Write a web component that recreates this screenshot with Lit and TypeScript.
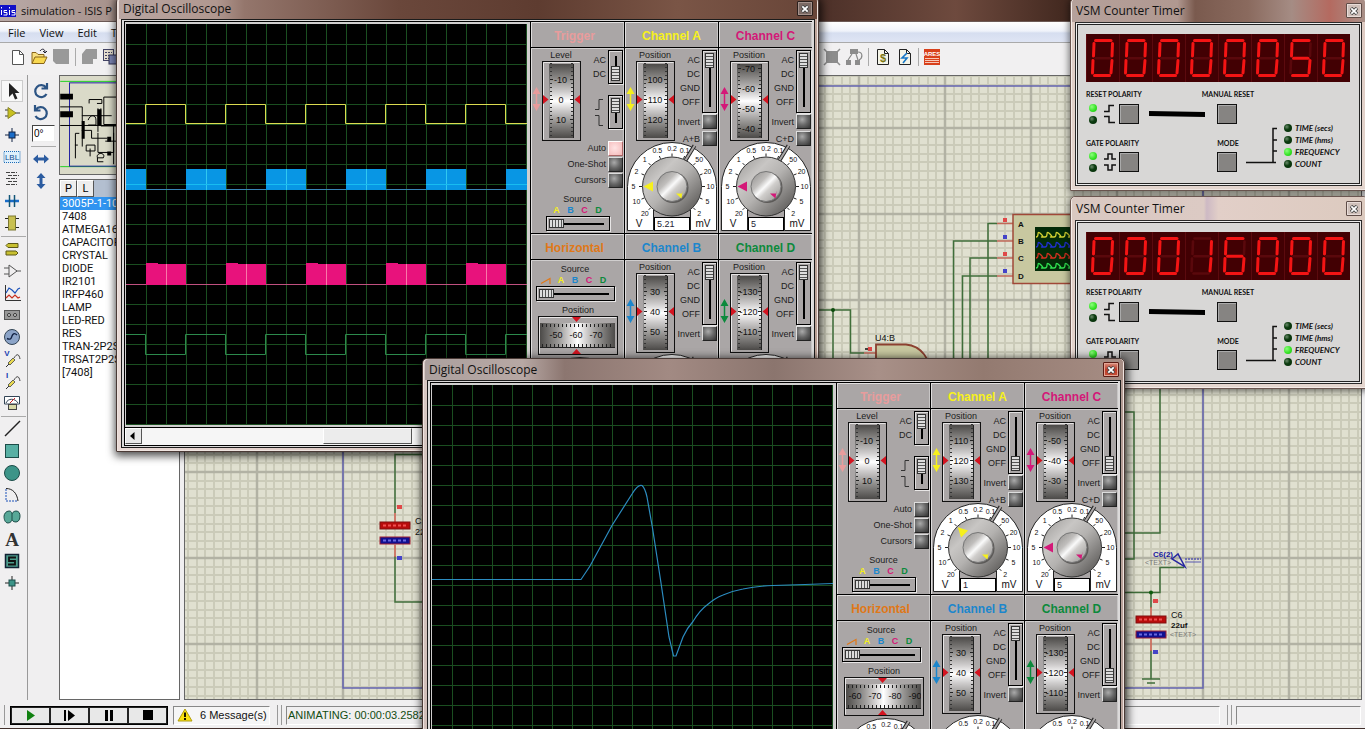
import { LitElement, html, svg, css } from "lit";
import { customElement, property } from "lit/decorators.js";
import { classMap } from "lit/directives/class-map.js";

const RED = "#d41420";
const COLORS = { A: "#f6f01c", B: "#1c86cc", C: "#d41878", D: "#0c8a3c" };

/* ---------- thumbwheel ---------- */
@customElement("thumb-wheel")
class ThumbWheel extends LitElement {
  @property({ attribute: false }) values: number[] = [];
  @property({ type: Number }) offset = 0;
  @property({ type: Boolean }) horizontal = false;

  static styles = css`
    :host { display: block; line-height: 0; }
    svg { display: block; }
    text { font: 9px "Liberation Sans", Arial, sans-serif; fill: #111; text-anchor: middle; }
  `;

  render() {
    return this.horizontal ? this.renderWide() : this.renderTall();
  }

  renderTall() {
    const ticks = Array.from({ length: 19 }, (_, i) => 2 + i * 4 + (this.offset ? 1 : 0));
    return html`<svg width="39" height="80" viewBox="0 0 39 80">
      <defs>
        <linearGradient id="g" x1="0" y1="0" x2="0" y2="1">
          <stop offset="0" stop-color="#4c4a48"/><stop offset=".2" stop-color="#8f8d8b"/>
          <stop offset=".38" stop-color="#cfcdcd"/><stop offset=".5" stop-color="#fff"/>
          <stop offset=".62" stop-color="#cfcdcd"/><stop offset=".8" stop-color="#8f8d8b"/>
          <stop offset="1" stop-color="#4c4a48"/>
        </linearGradient>
        <clipPath id="c"><rect x="7" y="3" width="25" height="74"/></clipPath>
      </defs>
      <rect x=".5" y=".5" width="38" height="79" fill="#aaa6a6" stroke="#111"/>
      <path d="M1.5 78.5V1.5H37.5" fill="none" stroke="#e8e6e6"/>
      <rect x="7" y="3" width="25" height="74" fill="url(#g)"/>
      <path d="M31.5 3V77" stroke="#222"/><path d="M7.5 3V77" stroke="#555" stroke-opacity=".5"/>
      ${ticks.map((y) => svg`<path d=${`M8 ${y + 0.5}h2M29 ${y + 0.5}h2`} stroke="#333"/>`)}
      <g clip-path="url(#c)">
        ${this.values.map((v, i) => {
          const y = 38.5 + (i - 1) * 20 + this.offset;
          return svg`<path d=${`M8 ${Math.floor(y) + 0.5}h3M28 ${Math.floor(y) + 0.5}h3`} stroke="#222"/>
            <text x=${v < 0 ? 18.5 : 19} y=${y + 3}>${v}</text>`;
        })}
      </g>
      <path d="M1 34v9l5.500 -4.500zM38 34v9l-5.500 -4.500z" fill=${RED}/>
    </svg>`;
  }

  renderWide() {
    const ticks = Array.from({ length: 18 }, (_, i) => 4 + i * 4);
    return html`<svg width="80" height="39" viewBox="0 0 80 39">
      <defs>
        <linearGradient id="g">
          <stop offset="0" stop-color="#4c4a48"/><stop offset=".25" stop-color="#9c9a98"/>
          <stop offset=".4" stop-color="#d8d6d6"/><stop offset=".5" stop-color="#fff"/>
          <stop offset=".6" stop-color="#d8d6d6"/><stop offset=".75" stop-color="#9c9a98"/>
          <stop offset="1" stop-color="#4c4a48"/>
        </linearGradient>
        <clipPath id="c"><rect x="2" y="7" width="75" height="25"/></clipPath>
      </defs>
      <rect x=".5" y=".5" width="79" height="38" fill="#aaa6a6" stroke="#111"/>
      <path d="M1.500 37.500V1.500H78.500" fill="none" stroke="#e8e6e6"/>
      <rect x="2" y="7" width="75" height="25" fill="url(#g)"/>
      <path d="M2 31.500H77" stroke="#222"/>
      ${ticks.map((x) => svg`<path d=${`M${x + 0.5} 8v3M${x + 0.5} 28v3`} stroke="#222"/>`)}
      <g clip-path="url(#c)">
        ${this.values.map((v, i) => svg`<text x=${18 + i * 20 + this.offset} y="22">${v}</text>`)}
      </g>
      <path d="M34 1h9l-4.500 5zM34 38h9l-4.500 -5z" fill=${RED}/>
    </svg>`;
  }
}

/* ---------- rotary knob ---------- */
@customElement("rotary-knob")
class RotaryKnob extends LitElement {
  @property() value = "";
  @property() color = "#fff";
  @property({ type: Number }) angle = -90;
  @property() unitLow = "V";
  @property() unitHigh = "mV";
  @property({ attribute: false }) scale = ["20", "10", "5", "2", "1", "0.5", "0.2", "0.1", "50", "20", "10", "5", "2"];

  static styles = css`
    :host { display: grid; width: 90px; height: 90px; }
    svg { grid-area: 1 / 1; display: block; }
    text { font: 7px "Liberation Sans", Arial, sans-serif; fill: #111; text-anchor: middle; }
    .unit { font-size: 10px; }
    input {
      grid-area: 1 / 1; align-self: end; margin: 0 0 1px 27px; width: 36px; height: 14px; box-sizing: border-box;
      border: 1px solid #000; background: #fff; padding: 0 2px; font: 9px "Liberation Sans", Arial, sans-serif; color: #223;
      border-radius: 0; outline: none;
    }
  `;

  render() {
    const pt = (deg: number, r: number) => {
      const a = (deg * Math.PI) / 180;
      return [45 + Math.sin(a) * r, 44.5 - Math.cos(a) * r];
    };
    return html`<svg width="90" height="90" viewBox="0 0 90 90">
        <defs>
          <linearGradient id="k" x1=".1" y1=".1" x2=".9" y2=".9">
            <stop offset="0" stop-color="#a8a6a4"/><stop offset=".25" stop-color="#c8c6c4"/>
            <stop offset=".5" stop-color="#b4b2b0"/><stop offset="1" stop-color="#5f5d5b"/>
          </linearGradient>
          <linearGradient id="s" x1=".1" y1=".1" x2=".9" y2=".9">
            <stop offset="0" stop-color="#9c9a98"/><stop offset=".3" stop-color="#c0bebc"/>
            <stop offset=".48" stop-color="#fafafa"/><stop offset=".62" stop-color="#d0cecc"/>
            <stop offset="1" stop-color="#a09e9c"/>
          </linearGradient>
        </defs>
        <path d="M.5 88.5V44.500A44.500 44 0 0 1 89.500 44.500V88.500H63.500V68H26.500V88.500Z" fill="#fff" stroke="#222"/>
        <path d="M67.500 3.500L57.500 20" stroke="#222" stroke-width="4"/><path d="M68 3L58 19" stroke="#aaa6a6" stroke-width="2"/>
        ${this.scale.map((t, i) => {
          const deg = -135 + i * 22.5;
          const [x1, y1] = pt(deg, 30);
          const [x2, y2] = pt(deg, 33);
          const [x, y] = pt(deg === 22.5 ? 19 : deg, 38.5);
          return svg`<path d=${`M${x1} ${y1}L${x2} ${y2}`} stroke="#222"/><text x=${x} y=${y + 2.5}>${t}</text>`;
        })}
        <circle cx="45" cy="44.500" r="29.500" fill="url(#k)" stroke="#333"/>
        <circle cx="46" cy="45.500" r="15.500" fill="#5c5a58"/>
        <circle cx="45" cy="44.500" r="15" fill="url(#s)" stroke="#777"/>
        <g transform=${`rotate(${this.angle + 90} 45 44.500)`}><path d="M16.500 44.500l9.500 -5v10z" fill=${this.color}/></g>
        <path d="M49 51.500h6.500v-3l-1 8z" fill=${this.color}/>
        <text class="unit" x="12" y="85">${this.unitLow}</text>
        <text class="unit" x="76" y="85">${this.unitHigh}</text>
      </svg>
      <input type="text" aria-label="Scale" .value=${this.value} />`;
  }
}

/* ---------- oscilloscope window ---------- */
interface Channel { wheel: number[]; offset?: number; coupling: number; value: string; angle?: number; }
interface ScopeModel {
  triggerDc: boolean; auto: boolean;
  a: Channel; b: Channel; c: Channel; d: Channel;
  horizontal: number[]; hOffset: number;
}

const scrollArrow = html`<svg width="5" height="8" viewBox="0 0 5 8"><path d="M4.500 0v8L0 4z" fill="#000"/></svg>`;
const closeIcon = html`<svg width="8" height="8" viewBox="0 0 8 8"><path d="M1 1l6 6M7 1l-6 6" stroke="#444" stroke-width="3.400"/><path d="M1.300 1.300l5.400 5.400M6.700 1.300l-5.400 5.400" stroke="#fff" stroke-width="1.800"/></svg>`;

@customElement("scope-window")
class ScopeWindow extends LitElement {
  @property({ attribute: false }) model!: ScopeModel;
  @property({ attribute: false }) trace: unknown = null;
  @property({ type: Boolean }) active = false;

  static styles = css`
    :host {
      display: block; font-family: "Liberation Sans", Arial, sans-serif; border: 1px solid #4a3a36; box-sizing: border-box;
      border-radius: 5px 5px 0 0; box-shadow: inset 0 0 0 1px #efe4e0, 1px 2px 8px 2px rgba(0, 0, 0, .7);
      background: linear-gradient(100deg, #ecdeda 0, #e2cfca 30%, #cdb6ac 75%, #b89d92 100%); padding: 0 3px 3px 4px;
    }
    :host([active]) { background: linear-gradient(100deg, #d8c8c4 0, #bca49c 30%, #a18880 75%, #bfa8a0 100%); }
    header { display: flex; justify-content: space-between; height: 21px; padding: 0 4px 0 4px; align-items: center;
      background: linear-gradient(90deg, #b9a6a2 0, #b0978f 14%, #94766c 18%, #6a473b 40%, #5e3c30 60%, #7a5546 80%, #684538 100%); margin: 0 -2px; border-radius: 4px 4px 0 0; }
    :host([active]) header { background: linear-gradient(90deg, #aca09e 0, #b7a8a4 14%, #8c7670 20%, #a28a83 35%, #8b756e 50%, #a89088 65%, #937a70 80%, #a68d84 100%); }
    h2 { margin: 0; font: 12px "Open Sans", "Noto Sans", sans-serif; line-height: 19px; color: #111; }
    .close { width: 16px; height: 15px; padding: 0; border: 1px solid #2b201d; border-radius: 1px; background: #7c6a64; display: grid; place-items: center; box-shadow: inset 0 0 0 1px #a4928c; }
    :host([active]) .close { background: linear-gradient(#d9907f, #bb3b28 50%, #c84e36); border-color: #5b1c14; box-shadow: inset 0 0 0 1px #e5a595; }
    .outer { border: 1px solid #1c1c1c; background: #dcdada; padding: 1px 2px; }
    .inner { border: 1px solid #000; display: flex; background: #d0cece; }
    .view { padding: 2px 3px 0 1px; }
    .screen { display: block; background: #000; }
    .scroll { border-top: 1px solid #000; margin: 2px -3px 0 -1px; height: 17px; display: flex; background: #f6f6f6; }
    .scroll button { width: 17px; height: 16px; padding: 0 2px 0 0; border: 1px solid; border-color: #fff #555 #555 #fff; background: #e8e8e8; display: grid; place-items: center; }
    .thumb { width: 89px; height: 16px; box-sizing: border-box; border: 1px solid; border-color: #fff #555 #555 #fff; background: #ececec; margin-left: 181px; }
    .panel { display: grid; grid-template-columns: repeat(3, 94px); background: #aaa6a6; }
    section { border-left: 1px solid #000; border-bottom: 1px solid #000; box-shadow: inset 1px 0 #e0dede, inset -1px 0 #c8c6c6; }
    section.last { border-bottom: 0; }
    h3 { margin: 0; height: 25px; border-bottom: 1px solid #000; font-size: 12px; line-height: 28px; text-align: center; font-weight: bold; box-shadow: inset 1px 1px #e0dede, 0 1px #d0cece; }
    h3.ct, h3.ch { padding-right: 6px; }
    .body { height: 185px; font-size: 9px; color: #1c1c1c; }
    .ca { color: #f6f01c; } .cb { color: #1c86cc; } .cc { color: #d41878; } .cd { color: #0c8a3c; }
    .ct { color: #e89c9c; } .ch { color: #e07818; }
    .top { height: 94px; display: flex; }
    .pos { display: grid; grid-template: 13px 80px / 11px 39px; width: 50px; }
    .pos span { grid-column: 1 / 3; padding-left: 10px; text-align: center; line-height: 15px; }
    .pos svg { margin-top: 26px; }
    .side { flex: 1; display: grid; grid-template-columns: 1fr 15px; column-gap: 2px; row-gap: 1px; padding: 2px 1px 0 0; align-content: start; margin-left: -1px; }
    .labels { text-align: right; line-height: 14px; padding-top: 3px; }
    .side label { text-align: right; line-height: 16px; }
    .side.trig { margin-left: 0; }
    .edge { display: grid; justify-items: end; align-content: start; gap: 5px; padding: 4px 3px 0 0; }
    .gap { height: 9px; grid-column: 1 / 3; }
    input { margin: 0; appearance: none; -webkit-appearance: none; box-sizing: border-box; border-radius: 0; }
    input[type="checkbox"] { width: 15px; height: 15px; border: 1px solid #222; border-color: #ddd #222 #222 #ddd; background: radial-gradient(circle at 40% 35%, #aaa 0, #666 50%, #333 100%); }
    input[type="checkbox"]:checked { background: radial-gradient(circle at 45% 45%, #ffe4e4 0, #f4b8b8 100%); border-color: #fff #a66 #a66 #fff; }
    input[type="range"] { border: 1px solid #000; box-shadow: 1px 1px #e8e6e6, inset 1px 1px #e0dede; padding: 2px; }
    .vert { writing-mode: vertical-lr; width: 15px; height: 63px; background: linear-gradient(#000, #000) center / 2px calc(100% - 10px) no-repeat #aaa6a6; }
    .vert.short { height: 34px; }
    .horz { width: 64px; height: 15px; background: linear-gradient(#000, #000) center / calc(100% - 10px) 2px no-repeat #aaa6a6; display: block; }
    .horz.long { width: 79px; }
    input::-webkit-slider-thumb { -webkit-appearance: none; border: 1px solid #333; box-sizing: border-box; }
    .vert::-webkit-slider-thumb { width: 9px; height: 15px; background: repeating-linear-gradient(#ddd 0 2px, #555 2px 3px); }
    .horz::-webkit-slider-thumb { width: 15px; height: 9px; background: repeating-linear-gradient(90deg, #ddd 0 2px, #555 2px 3px); }
    rotary-knob { margin-left: 2px; }
    .modes { display: grid; grid-template-columns: 1fr 15px; gap: 1px 2px; padding-right: 1px; text-align: right; line-height: 15px; margin-top: -1px; }
    .source { display: grid; justify-items: center; margin-top: 6px; line-height: 11px; }
    .source.h { margin-top: 0; padding: 4px 5px 0 0; }
    .letters { display: flex; font-weight: bold; font-size: 9px; line-height: 11px; align-items: center; }
    .letters b { width: 14px; text-align: center; }
    .hpos { display: grid; justify-items: center; padding: 3px 4px 0 0; line-height: 12px; }
    .hpos rotary-knob { margin: 2px 0 0 4px; }
  `;

  renderArrow(color: string) {
    return html`<svg width="11" height="24" viewBox="0 0 11 24"><path d="M5.500 4V20" stroke=${color} stroke-width="1.500"/><path d="M5.500 0L9.500 7h-8zM5.500 24L9.500 17h-8z" fill=${color}/></svg>`;
  }

  renderChannel(name: "A" | "B" | "C" | "D", ch: Channel, sum: string, last = false) {
    const color = COLORS[name];
    return html`<section class=${classMap({ last })}>
      <h3 class=${"c" + name.toLowerCase()}>Channel ${name}</h3>
      <div class="body">
        <div class="top">
          <div class="pos"><span>Position</span>${this.renderArrow(color)}
            <thumb-wheel .values=${ch.wheel} .offset=${ch.offset ?? 0}></thumb-wheel></div>
          <div class="side">
            <div class="labels">AC<br />DC<br />GND<br />OFF</div>
            <input class="vert" type="range" min="0" max="3" .value=${String(ch.coupling)} aria-label=${`Channel ${name} coupling`} />
            <label for=${"inv" + name}>Invert</label><input id=${"inv" + name} type="checkbox" />
            ${sum ? html`<label for=${"sum" + name}>${sum}</label><input id=${"sum" + name} type="checkbox" />` : null}
          </div>
        </div>
        <rotary-knob .value=${ch.value} .color=${color} .angle=${ch.angle ?? -90}></rotary-knob>
      </div>
    </section>`;
  }

  render() {
    const m = this.model;
    const lines = Array.from({ length: 20 }, (_, i) => (i + 1) * 20 + 0.5);
    return html`
      <header><h2>Digital Oscilloscope</h2><button class="close" aria-label="Close">${closeIcon}</button></header>
      <div class="outer"><div class="inner">
        <div class="view">
          <svg class="screen" width="401" height="401" viewBox="0 0 401 401">
            ${lines.map((p) => svg`<path d=${`M${p} 0V401M0 ${p}H401`} stroke="#1a4e20"/>`)}
            ${this.trace}
          </svg>
          <div class="scroll"><button aria-label="Scroll left">${scrollArrow}</button><div class="thumb"></div></div>
        </div>
        <div class="panel">
          <section>
            <h3 class="ct">Trigger</h3>
            <div class="body">
              <div class="top">
                <div class="pos"><span>Level</span>${this.renderArrow("#e89c9c")}
                  <thumb-wheel .values=${[-10, 0, 10]}></thumb-wheel></div>
                <div class="side trig">
                  <div class="labels">AC<br />DC</div>
                  <input class="vert short" type="range" min="0" max="1" .value=${m.triggerDc ? "1" : "0"} aria-label="Trigger coupling" />
                  <div class="gap"></div>
                  <div class="edge">
                    <svg width="8" height="11" viewBox="0 0 8 11"><path d="M0 10.500h4V.5h4" fill="none" stroke="#333"/></svg>
                    <svg width="8" height="11" viewBox="0 0 8 11"><path d="M0 .5h4v10h4" fill="none" stroke="#333"/></svg>
                  </div>
                  <input class="vert short" type="range" min="0" max="1" value="0" aria-label="Trigger edge" />
                </div>
              </div>
              <div class="modes">
                <label for="auto">Auto</label><input id="auto" type="checkbox" .checked=${m.auto} />
                <label for="one">One-Shot</label><input id="one" type="checkbox" />
                <label for="cur">Cursors</label><input id="cur" type="checkbox" />
              </div>
              <div class="source">
                <label for="tsrc">Source</label>
                <div class="letters"><b class="ca">A</b><b class="cb">B</b><b class="cc">C</b><b class="cd">D</b></div>
                <input id="tsrc" class="horz" type="range" min="0" max="3" value="0" />
              </div>
            </div>
          </section>
          ${this.renderChannel("A", m.a, "A+B")}
          ${this.renderChannel("C", m.c, "C+D")}
          <section class="last">
            <h3 class="ch">Horizontal</h3>
            <div class="body">
              <div class="source h">
                <label for="hsrc">Source</label>
                <div class="letters"><svg width="14" height="8" viewBox="0 0 14 8"><path d="M1 6.500L10 1.500V7" fill="none" stroke="#e07818" stroke-width="1.200"/></svg><b class="ca">A</b><b class="cb">B</b><b class="cc">C</b><b class="cd">D</b></div>
                <input id="hsrc" class="horz long" type="range" min="0" max="4" value="0" />
              </div>
              <div class="hpos"><span>Position</span>
                <thumb-wheel horizontal .values=${m.horizontal} .offset=${m.hOffset}></thumb-wheel>
                <rotary-knob value="50" color="#e07818" unitLow="ms" unitHigh="µs" .scale=${["200", "50", "20", "5", "1", "0.5", "0.2", "0.1", "50", "20", "5", "2", "0.5"]}></rotary-knob>
              </div>
            </div>
          </section>
          ${this.renderChannel("B", m.b, "", true)}
          ${this.renderChannel("D", m.d, "", true)}
        </div>
      </div></div>`;
  }
}

/* ---------- counter timer window ---------- */
const SEGMENTS: Record<string, string> = { "0": "abcdef", "1": "bc", "5": "afgcd", "6": "afgedc" };
const SEG_PATHS: Record<string, string> = {
  a: "M9.500 6.500H25", b: "M26.500 9.500L26 22", c: "M26 26.500L25 39", d: "M8.500 41.500H23.500",
  e: "M7 26.500L6.500 39", f: "M8 9.500L7.500 22", g: "M9.500 24.200H24",
};

@customElement("counter-window")
class CounterWindow extends LitElement {
  @property() digits = "";
  @property({ type: Boolean }) dark = false;

  static styles = css`
    :host {
      display: block; box-sizing: border-box; border: 1px solid #6b5650; border-radius: 5px 5px 0 0; padding: 0 5px 4px 4px;
      background: linear-gradient(#ddc9c1, #e4d6cf); box-shadow: inset 0 0 0 1px #f4ebe7, 0 1px 7px 1px rgba(0, 0, 0, .55);
    }
    header { display: flex; justify-content: space-between; align-items: center; height: 23px; padding-left: 4px; margin: 0 -3px; padding-right: 3px;
      background: linear-gradient(90deg, #d9c8c1 0, #dccac4 45%, #cdb9c4 46%, #e2cfc8 50%, #dccabf 100%); border-radius: 4px 4px 0 0; }
    :host([dark]) header { background: linear-gradient(90deg, #b5a19b 0, #b09890 36%, #7a5a4e 42%, #8a6a5e 60%, #a58c84 75%, #b46a60 88%, #a89088 100%); }
    h2 { margin: 0; font: 12px "Open Sans", "Noto Sans", sans-serif; line-height: 22px; color: #111; }
    .close { width: 16px; height: 15px; padding: 0; border: 1px solid #5f4d48; background: #cfc0ba; display: grid; place-items: center; border-radius: 1px; box-shadow: inset 0 0 0 1px #e8dcd8; }
    .outer { border: 1px solid #2a2a2a; background: #eee; padding: 1px; }
    .inner { border: 1px solid #222; background: #d8d7d6; height: 160px; box-sizing: border-box; padding: 9px 0 0 8px; font: bold 8px Lato, "Open Sans", sans-serif; color: #111; }
    .display { display: block; }
    .controls { display: grid; grid-template-columns: 17px 16px 30px 74px 54px 1fr; grid-template-rows: 21px 22px 26px 22px; align-items: center; }
    .cap { grid-column: 1 / 5; line-height: 12px; padding-top: 3px; font-size: 7px; white-space: nowrap; }
    .cap.mid { grid-column: 5; margin-left: -22px; width: 54px; text-align: center; }
    .cap.low { padding-top: 10px; }
    .leds { grid-column: 1; display: grid; gap: 4px; padding-left: 3px; }
    .led { width: 8px; height: 8px; border-radius: 50%; background: radial-gradient(circle at 35% 35%, #6a8a6a 0, #0c3c10 40%, #062a08 100%); }
    .led.on { background: radial-gradient(circle at 35% 35%, #8cff7c 0, #30e020 60%, #28b81c 100%); }
    .key { width: 20px; height: 20px; padding: 0; border: 1px solid #111; background: #868482; box-shadow: inset 1px 1px #aaa; }
    .bar { width: 56px; height: 6px; }
    .k2 { grid-column: 5; margin-left: -6px; }
    .out { grid-column: 6; grid-row: 3 / 5; align-self: end; display: flex; align-items: center; margin: 0 0 3px -31px; height: 48px; }
    ul { list-style: none; margin: 0 0 0 6px; padding: 0; display: grid; }
    li { display: flex; align-items: center; gap: 3px; height: 12px; font-style: italic; white-space: nowrap; }
  `;

  renderRow(high: string, low: string, label: string, bar: boolean) {
    return html`
      <div class="leds"><i class="led on"></i><i class="led"></i></div>
      <svg width="14" height="20" viewBox="0 0 14 20"><path d=${high + low} fill="none" stroke="#111" stroke-width="1.500"/></svg>
      <button class="key" aria-label=${label}></button>
      ${bar ? html`<svg class="bar" viewBox="0 0 56 6"><path d="M0 0L56 1V6L0 5z" fill="#000"/></svg>` : html`<span></span>`}`;
  }

  render() {
    return html`
      <header><h2>VSM Counter Timer</h2><button class="close" aria-label="Close">${closeIcon}</button></header>
      <div class="outer"><div class="inner">
        <svg class="display" width="264" height="48" viewBox="0 0 264 48" role="img" aria-label=${this.digits}>
          <rect width="264" height="48" fill="#420003"/>
          ${[...this.digits].map((d, i) => svg`<g transform=${`translate(${i * 33} 0)`}>
            <path d="M.5 0V48" stroke="#5c0a0e"/>
            ${Object.entries(SEG_PATHS).map(([k, p]) => {
              const on = SEGMENTS[d].includes(k);
              return svg`<path d=${p} stroke=${on ? "#f41414" : "#5a080c"} stroke-width=${on ? 3 : 2.6} stroke-linecap="round"/>`;
            })}</g>`)}
        </svg>
        <div class="controls">
          <span class="cap">RESET POLARITY</span><span class="cap mid">MANUAL RESET</span>
          ${this.renderRow("M1 7.500h5v-6h5", "M1 12.500h5v6h6", "Reset polarity", true)}
          <button class="key k2" aria-label="Manual reset"></button>
          <span class="cap low">GATE POLARITY</span><span class="cap mid low">MODE</span>
          ${this.renderRow("M1 7h4v-5h4v5h4", "M1 13h4v5h4v-5h4", "Gate polarity", false)}
          <button class="key k2" aria-label="Mode"></button>
          <div class="out">
            <svg width="32" height="48" viewBox="0 0 32 48"><path d="M0 40.500H30M27 40V6.500h4M27 18h4M27 29h4" fill="none" stroke="#111" stroke-width="1.500"/></svg>
            <ul>
              <li><i class="led"></i>TIME (secs)</li><li><i class="led"></i>TIME (hms)</li>
              <li><i class="led on"></i>FREQUENCY</li><li><i class="led"></i>COUNT</li>
            </ul>
          </div>
        </div>
      </div></div>`;
  }
}

/* ---------- traces ---------- */
const square = (y0: number, y1: number) => {
  let d = `M0 ${y0}`;
  let up = false;
  for (let x = 20; x < 400; x += 40) {
    up = !up;
    d += `H${x - 0.5}V${up ? y1 : y0}`;
  }
  return d + "H401";
};
const xs = (start: number) => [0, 1, 2, 3, 4].map((i) => start + i * 80);
const tracePwm = svg`
  <path d=${square(99.5, 80.5)} fill="none" stroke="#dcdc50"/>
  <path d="M0 165.500H401" stroke="#3a86b8"/>
  <rect x="0" y="145" width="20" height="21" fill="#0896e4"/>
  ${xs(60).map((x) => svg`<rect x=${x} y="145" width=${Math.min(40, 401 - x)} height="21" fill="#0896e4"/><path d=${`M${x + 20.5} 145v21`} stroke="#30c8f0"/><path d=${`M${x} 160.500h40`} stroke="#18bcf0"/>`)}
  <rect x="380" y="145" width="21" height="21" fill="#0896e4"/><path d="M0 160.500h20M380 160.500h21" stroke="#18bcf0"/>
  <path d="M0 260.500H401" fill="none" stroke="#c05080"/>
  ${xs(20).map((x) => svg`<path d=${`M${x} 239h12v1h28v21h-40z`} fill="#e8127c"/><path d=${`M${x + 20.5} 240v21`} stroke="#f878a8"/>`)}
  <path d=${square(310.5, 330.5)} fill="none" stroke="#2c8a4c"/>`;
const tracePulse = svg`<path d="M0 194.500H149L158 181L180 140.500L200 109Q206 99 210 100.500Q213 103 215 112L220.500 143L229 198L237 252L241.500 271H244L251 252Q255 243 261 236.500Q268 225 275 220Q283 213 291 210Q300 206 311 204Q325 201 341 200.500L373 199.500L401 198.500" fill="none" stroke="#2c8cc0" stroke-width="1.200"/>`;

const scopeOne: ScopeModel = {
  triggerDc: true, auto: true,
  a: { wheel: [100, 110, 120], coupling: 0, value: "5.21" },
  b: { wheel: [30, 40, 50], coupling: 0, value: "5" },
  c: { wheel: [-70, -60, -50, -40], offset: -11, coupling: 0, value: "5" },
  d: { wheel: [-130, -120, -110], coupling: 0, value: "5" },
  horizontal: [-50, -60, -70], hOffset: 0,
};
const scopeTwo: ScopeModel = {
  triggerDc: false, auto: false,
  a: { wheel: [110, 120, 130], coupling: 3, value: "1", angle: 45 },
  b: { wheel: [30, 40, 50], coupling: 0, value: "5" },
  c: { wheel: [-50, -40, -30], coupling: 3, value: "5" },
  d: { wheel: [-130, -120, -110], coupling: 3, value: "5" },
  horizontal: [-60, -70, -80, -90], hOffset: -7,
};
scopeTwo.a.angle = -45;

/* ---------- tool icons (22 x 22 box) ---------- */
const ico = (body: unknown) => html`<svg width="22" height="22" viewBox="0 0 22 22">${body}</svg>`;
const OLIVE = "#c8c020";
const modeGroups: [string, unknown][][] = [
  [
    ["Selection", ico(svg`<path d="M8 3v14l3.500-3.500 2.500 6 2.500-1-2.500-5.500h4.500z" fill="#222"/>`)],
    ["Component", ico(svg`<path d="M4 8h3M4 14h3M14 11h5" stroke="#333"/><path d="M7 5.500v11l8-5.500z" fill=${OLIVE} stroke="#8a8628"/>`)],
    ["Junction", ico(svg`<path d="M11 4v14M4 11h14" stroke="#124"/><rect x="8" y="8" width="6" height="6" fill="#1a6cc8" stroke="#124"/>`)],
    ["Label", ico(svg`<rect x="3" y="5.500" width="16" height="11" fill="#dff0fc" stroke="#1a6cb8" stroke-dasharray="1 1"/><text class="lbl" x="11" y="14">LBL</text>`)],
    ["Script", ico(svg`<path d="M5 4.500h11M7 7.500h11M5 10.500h11M7 13.500h9M5 16.500h11" stroke="#444" stroke-dasharray="4 1"/>`)],
    ["Bus", ico(svg`<path d="M4 11h14" stroke="#1a6cc8" stroke-width="2.500"/><path d="M8.500 5v12M13.500 5v12" stroke="#157" stroke-width="1.500"/>`)],
    ["Subcircuit", ico(svg`<path d="M4 6.500h3M4 15.500h3M15 6.500h3M15 15.500h3" stroke="#222"/><rect x="7.500" y="4" width="7" height="14" fill="#c8c050" stroke="#7c7830"/>`)],
  ],
  [
    ["Terminal", ico(svg`<path d="M7 5.500h10v4H7l-2-2zM5 13h10l2 2-2 2H5z" fill="#c8c030" stroke="#5c5818"/>`)],
    ["Pin", ico(svg`<path d="M8 5v12l8-6zM3 8h5M3 14h5M15 11h5" fill="none" stroke="#555"/>`)],
    ["Graph", ico(svg`<path d="M4.500 3v15.500H20" fill="none" stroke="#333"/><path d="M5 11l3-5 3 2 3 3 3-4 2-1" fill="none" stroke="#1a50b8" stroke-width="1.200"/><path d="M5 16l3-3 3 3 3-3 3 3 2-1" fill="none" stroke="#c83020" stroke-width="1.200"/>`)],
    ["Tape", ico(svg`<rect x="3.500" y="6.500" width="15" height="9" fill="#999" stroke="#555"/><circle cx="8" cy="11" r="1.500" fill="#ddd" stroke="#333"/><circle cx="14" cy="11" r="1.500" fill="#ddd" stroke="#333"/>`)],
    ["Generator", ico(svg`<circle cx="11" cy="11" r="7.500" fill="#8ca4c8" stroke="#345"/><path d="M6 12.500c4 2 4.500-1 5-2.500s2-4 5-1" fill="none" stroke="#124" stroke-width="1.400"/>`)],
    ["Voltage probe", ico(svg`<text class="tip" x="6" y="8">V</text><path d="M5 19l3-3" stroke="#333"/><path d="M7 15l5-5 2 2-5 5z" fill="#e8d850" stroke="#665"/><path d="M13 10c3-5 5-4 6 1" fill="none" stroke="#444"/>`)],
    ["Current probe", ico(svg`<text class="tip" x="6" y="8">I</text><path d="M5 19l3-3" stroke="#333"/><path d="M7 15l5-5 2 2-5 5z" fill="#e8d850" stroke="#665"/><path d="M13 10c3-5 5-4 6 1" fill="none" stroke="#444"/>`)],
    ["Instrument", ico(svg`<path d="M3.500 12V4.500h15V12z" fill="#fff" stroke="#345"/><path d="M5 11c2-5 9-5 12 0" fill="none" stroke="#345"/><path d="M9 11l5-5" stroke="#c22"/><rect x="7.500" y="12.500" width="8" height="5" fill="#d8d8a8" stroke="#444"/>`)],
  ],
  [
    ["Line", ico(svg`<path d="M4 18L19 3" stroke="#222" stroke-width="1.500"/>`)],
    ["Box", ico(svg`<rect x="4.500" y="4.500" width="13" height="13" fill="#58b0a4" stroke="#1c4c48"/>`)],
    ["Circle", ico(svg`<circle cx="11" cy="11" r="7.500" fill="#3c9488" stroke="#1c4c48"/>`)],
    ["Arc", ico(svg`<path d="M5 5v12h12" fill="none" stroke="#1a50b8" stroke-dasharray="2 1"/><path d="M5 4.500c7 0 11 5 12 12.500" fill="none" stroke="#222"/>`)],
    ["Path", ico(svg`<path d="M8 5c3 0 3 3 3 3s1-3 4-3 4 2.500 4 5-1 6-4 6-4-2-4-2-1 3-4 3-4-4-4-6.500S5 5 8 5z" fill="#58a898" stroke="#1c4c48"/><path d="M11 8v6" stroke="#1c4c48"/>`)],
    ["Text", ico(svg`<text class="bigA" x="11" y="18">A</text>`)],
    ["Symbol", ico(svg`<rect x="4.500" y="4.500" width="13" height="13" fill="#4c9c8c" stroke="#123" stroke-width="1.500"/><path d="M15 7.500H8v3.500h6v3.500H7" fill="none" stroke="#111" stroke-width="1.800"/>`)],
    ["Marker", ico(svg`<path d="M11 4v14M4 11h14" stroke="#222"/><rect x="8" y="8" width="6" height="6" fill="#3c9488" stroke="#1c4c48"/>`)],
  ],
];
const rotate = (d: string, label: string): [string, unknown] => [label, ico(svg`<path d=${d} fill="none" stroke="#2c5484" stroke-width="2.200"/>`)];
const dotted = svg`<path d="M6.500 3.500h7l4 4v11h-11z" fill="#f4f4e8" stroke="#222"/><path d="M13.500 3.500v4h4" fill="none" stroke="#222"/>`;

@customElement("app-root")
class AppRoot extends LitElement {
  static styles = css`
    :host { display: block; position: relative; height: 100vh; overflow: hidden; background: #f0eff0; font-family: "Liberation Sans", Arial, sans-serif; color: #111; }
    .shell { display: flex; flex-direction: column; height: 100%; border-bottom: 1px solid #42302c; box-sizing: border-box; }
    .title { height: 22px; display: flex; align-items: center; gap: 5px; font: 11px "Open Sans", "Noto Sans", sans-serif;
      background: linear-gradient(90deg, #b8a9a6 0, #a8938d 8%, #6a4a40 15%, #4c3028 60%, #6e4a3e 70%, #432920 78%, #5a3a30 100%); border-bottom: 1px solid #6c5a56; box-sizing: border-box; }
    .menu { height: 21px; display: flex; align-items: center; padding-left: 8px; gap: 14px; font: 11px "Open Sans", "Noto Sans", sans-serif; background: linear-gradient(#fff 0, #f0f3fa 45%, #d6def0 55%, #dfe5f4 100%); border-bottom: 1px solid #aaa; box-sizing: border-box; }
    .menu a { color: #111; text-decoration: none; white-space: nowrap; }
    .tools { height: 32px; display: flex; align-items: center; background: #f1f0f1; box-sizing: border-box; padding: 0 0 4px 6px; }
    .tools button, .modes button { width: 22px; height: 22px; padding: 0; border: 0; background: none; display: block; }
    .tools .left { display: flex; align-items: center; flex: 0 0 815px; }
    .sep { width: 6px; height: 18px; background: linear-gradient(#aaa, #aaa) center / 1px 100% no-repeat; }
    .main { flex: 1; display: flex; min-height: 0; padding-right: 3px; }
    .modes { width: 28px; box-sizing: border-box; border-right: 1px solid #999; padding: 5px 0 0 1px; }
    .modes .pressed { outline: 1px solid #ccc; outline-offset: -1px; background: #f8f8f8; }
    .rot { width: 31px; display: flex; flex-direction: column; align-items: center; padding-top: 5px; box-sizing: border-box; }
    .rot button { width: 22px; height: 22px; padding: 0; border: 0; background: none; display: block; margin-right: 6px; }
    .rot input { width: 23px; height: 17px; box-sizing: border-box; border: 1px solid #444; border-color: #444 #eee #eee #444; background: #fff; font-size: 10px; padding: 0 1px; margin: 1px 0 2px; border-radius: 0; }
    .hr { height: 4px; width: 25px; background: linear-gradient(#aaa, #aaa) center / 100% 1px no-repeat; }
    .side { width: 121px; display: flex; flex-direction: column; }
    .preview { border: 1px solid #666; background: #dadac8; height: 100px; box-sizing: border-box; overflow: hidden; display: block; }
    .parts { margin-top: 4px; border: 1px solid #666; background: #fff; flex: 1; min-height: 0; font: 11px Roboto, "Liberation Sans", sans-serif; }
    .bar { height: 17px; background: #b3bfd0; display: flex; }
    .bar button { width: 17px; padding: 0; border: 1px solid; border-color: #fff #555 #555 #fff; background: #ededed; font: 11px Roboto, "Liberation Sans", sans-serif; }
    ul { margin: 0; padding: 0; list-style: none; }
    li { height: 13px; line-height: 13px; padding-left: 2px; }
    li.sel { background: #3094f0; color: #fff; }
    .sheet { flex: 1; margin-left: 4px; border: 1px solid #666; background: #e0e0d0; min-width: 0; }
    .sheet svg { display: block; width: 100%; height: 100%; }
    .status { height: 28px; display: flex; align-items: center; font-size: 11px; box-sizing: border-box; padding: 2px 4px 0; }
    .play { display: flex; border: 1px solid #000; margin-left: 5px; }
    .play button { width: 39px; height: 17px; padding: 0; border: 1px solid; border-color: #fff #444 #444 #fff; background: #e8e8e8; display: grid; place-items: center; outline: 1px solid #222; outline-offset: -1px; }
    .field { height: 19px; box-sizing: border-box; border: 1px solid; border-color: #888 #fff #fff #888; display: flex; align-items: center; white-space: nowrap; overflow: hidden; }
    .msg { width: 97px; margin-left: 5px; padding-left: 3px; gap: 7px; background: #f6f6f6; }
    .anim { flex: 1; color: #124c12; padding-left: 1px; }
    .grip { width: 5px; height: 20px; border: solid #999; border-width: 0 1px; margin: 0 4px 0 7px; box-sizing: border-box; }
    .grip.one { width: 1px; border-width: 0 0 0 1px; margin: 0; }
    .last { width: 125px; }
    .win { position: absolute; }
    .w1 { left: 116px; top: -3px; width: 703px; }
    .w2 { left: 422px; top: 358px; width: 703px; }
    .c1 { left: 1070px; top: -2px; width: 298px; }
    .c2 { left: 1070px; top: 196px; width: 298px; }
    text { font-family: "Liberation Sans", Arial, sans-serif; }
    .t { font-size: 9px; fill: #111; } .s { font-size: 8px; fill: #111; font-weight: bold; } .g { font-size: 7px; fill: #777; } .n { font-size: 8px; fill: #1818a0; font-weight: bold; }
    .lbl { font-size: 8px; fill: #124c90; text-anchor: middle; }
    .tip { font-size: 8px; fill: #1a40b0; text-anchor: middle; font-weight: bold; }
    .bigA { font: bold 19px "Liberation Serif", serif; fill: #333; text-anchor: middle; }
    .ares { font: bold 6px "Liberation Sans", sans-serif; fill: #fff; text-anchor: middle; }
    .dol { font: bold 11px "Liberation Sans", sans-serif; fill: #7a7410; text-anchor: middle; }
  `;

  renderSheet() {
    const minor = [9, 17, 26, 34, 43, 52, 60, 69, 77].map((p) => `M${p} 0V86M0 ${p}H86`).join("");
    const cap = (x: number, y: number) => svg`
      <path d=${`M${x} ${y - 12}v12M${x} ${y + 20}v12`} stroke="#d06050" stroke-width="1.500"/>
      <rect x=${x - 15} y=${y - 3} width="30" height="7" fill="#b80c0c" stroke="#801010"/><path d=${`M${x - 12} ${y + 0.5}h24`} stroke="#f05050" stroke-width="2" stroke-dasharray="3 2"/>
      <rect x=${x - 15} y=${y + 12} width="30" height="7" fill="#101090" stroke="#a02030"/><path d=${`M${x - 12} ${y + 15.5}h24`} stroke="#6868e0" stroke-width="2" stroke-dasharray="3 2"/>
      <rect x=${x + 2} y=${y - 20} width="5" height="4" fill="#e04848"/><rect x=${x + 2} y=${y + 31} width="5" height="4" fill="#4444c8"/>`;
    const waves: [number, string][] = [[235, "#d0d030"], [245, "#2030d0"], [256, "#d03020"], [266, "#30e050"]];
    return html`<svg><defs>
        <pattern id="grid" x="0" y="0" width="86" height="86" patternUnits="userSpaceOnUse" patternTransform="translate(-1 42)">
          <path d=${minor} stroke="#cbcbb9" stroke-width="2"/><path d="M0 0V86M0 0H86M86 0V86M0 86H86" stroke="#b2b2a4" stroke-width="2.500"/>
        </pattern></defs>
      <g transform="translate(-185 -76)">
        <rect x="0" y="0" width="3000" height="2000" fill="url(#grid)"/>
        <path d="M343 86H1203V688H343Z" fill="none" stroke="#6464b0" stroke-width="1.500"/>
        <g fill="none" stroke="#3f6e3a" stroke-width="1.500">
          <path d="M440 454.500H395V513M395 556V602H440"/>
          <path d="M800 310H850.500V353H864M833 310V400"/>
          <path d="M997 223.500H988V400M997 241H953.500V400M997 258H970V400M997 276H962.500V400"/>
          <path d="M1160 380V533H1100M1100 412H1134V559H1100M1100 592.500H1160V567.500H1184M1151 592V608M1151 650V679M1142 679H1160M1147 683H1155"/>
        </g>
        <circle cx="833" cy="310" r="2" fill="#0c4c0c"/><circle cx="1151" cy="592.500" r="2" fill="#0c5c0c"/>
        <path d="M997 223.500H1013M997 241H1013M997 258H1013M997 276H1013M864 353H876" stroke="#c06858" stroke-width="1.500"/>
        <rect x="1013" y="214.500" width="80" height="69" fill="#c8c8a0" stroke="#a04838" stroke-width="1.500"/>
        <rect x="1035" y="227" width="50" height="44" fill="#042c08"/>
        ${waves.map(([y, c]) => svg`<path d=${`M1036 ${y + 2}` + "q2 0 2-3t3 0 1 3 3 0".repeat(7)} fill="none" stroke=${c} stroke-width="1.300"/>`)}
        <rect x="1003" y="218" width="4" height="4" fill="#e04848"/><rect x="1003" y="235" width="4" height="4" fill="#4444c8"/>
        <rect x="1003" y="252" width="4" height="4" fill="#e04848"/><rect x="1003" y="269" width="4" height="4" fill="#4444c8"/>
        <text class="s" x="1018" y="227">A</text><text class="s" x="1018" y="244">B</text><text class="s" x="1018" y="261">C</text><text class="s" x="1018" y="279">D</text>
        <path d="M876 344.500H906C922 346 930 360 930 372H876Z" fill="#c8c8a0" stroke="#8c4030" stroke-width="1.800"/>
        <rect x="868" y="347" width="4" height="4" fill="#e04848"/><path d="M865 349h3" stroke="#111" stroke-width="1.500"/>
        <text class="t" x="875" y="341">U4:B</text>
        ${cap(395, 525)}<text class="t" x="415" y="524">C5</text><text class="t" x="415" y="535">22uf</text>
        ${cap(1151, 619)}<text class="t" x="1171" y="618">C6</text><text class="s" x="1171" y="628">22uf</text><text class="g" x="1170" y="637">&lt;TEXT&gt;</text>
        <text class="n" x="1153" y="557">C6(2)</text><text class="g" x="1145" y="565">&lt;TEXT&gt;</text>
        <path d="M1172 559l6-5 7 13z" fill="none" stroke="#2828a0" stroke-width="1.500"/>
        <path d="M1185 559h16" stroke="#5858b0" stroke-dasharray="2 1" stroke-width="1.500"/><path d="M1185 562h16" stroke="#5858b0"/>
      </g></svg>`;
  }

  render() {
    const parts = ["3005P-1-102", "7408", "ATMEGA16", "CAPACITOR", "CRYSTAL", "DIODE", "IR2101", "IRFP460", "LAMP", "LED-RED", "RES", "TRAN-2P2S", "TRSAT2P2S", "[7408]"];
    return html`
      <div class="shell">
        <div class="title">
          <svg width="16" height="12" viewBox="0 0 16 12"><rect width="16" height="12" fill="#1010c8"/><path d="M1.500 5v5M1.500 2v1.500M7 5.500H4v2h3v2.500H3.500M9.500 5v5M9.500 2v1.500M15 5.500h-3v2h3v2.500h-3.500" fill="none" stroke="#fff"/></svg>
          <span>simulation - ISIS P</span>
        </div>
        <nav class="menu"><a href="#">File</a><a href="#">View</a><a href="#">Edit</a><a href="#">Tools</a></nav>
        <div class="tools">
          <div class="left">
            <button aria-label="New">${ico(svg`<path d="M6.500 4.500h7l4 4v10h-11z" fill="#fff" stroke="#555"/><path d="M13.500 4.500v4h4" fill="none" stroke="#555"/>`)}</button>
            <button aria-label="Open">${ico(svg`<path d="M4 17.500V6.500h4l2 2h6v3" fill="#f8e080" stroke="#886418"/><path d="M4 17.500l3-6.500h12l-3 6.500z" fill="#f8d850" stroke="#886418"/><path d="M12 5c2-3 5-2 5 1m-2-1l2 2 2-2" fill="none" stroke="#223"/>`)}</button>
            <button aria-label="Save">${ico(svg`<path d="M3 3h16v15H6l-3-3z" fill="#999"/>`)}</button>
            <span class="sep"></span>
            <button aria-label="Import">${ico(svg`<path d="M8 3h11v10h-4v5H4V8z" fill="#999"/>`)}</button>
            <button aria-label="Export">${ico(svg`<rect x="3.500" y="3.500" width="10" height="11" fill="#e8e0d0" stroke="#446"/><path d="M5 6.500h7M5 9.500h7M5 12.500h7" stroke="#446" stroke-dasharray="2 1"/><rect x="9" y="9" width="10" height="9" fill="#8088b8" stroke="#335"/>`)}</button>
          </div>
          <button aria-label="Decompose">${ico(svg`<path d="M5 5h12v12H5z" fill="#8c8c8c"/><path d="M3 3l16 16M19 3L3 19" stroke="#8c8c8c" stroke-width="1.500"/>`)}</button>
          <button aria-label="Search tag">${ico(svg`<path d="M7 3h8v5H7zM3 14h5v5H3zM12 14h5v5h-5z" fill="#8c8c8c"/><path d="M9 8l-4 6M13 8l2 6M15 6c5 0 5 6 1 8" fill="none" stroke="#888" stroke-width="1.200"/>`)}</button>
          <span class="sep"></span>
          <button aria-label="Bill of materials">${ico(svg`${dotted}<text class="dol" x="12" y="16">$</text>`)}</button>
          <button aria-label="Electrical rules">${ico(svg`${dotted}<path d="M14 7l-5 5h5l-4 5" fill="none" stroke="#1878c8" stroke-width="1.600"/>`)}</button>
          <span class="sep"></span>
          <button aria-label="ARES">${ico(svg`<rect x="3" y="3" width="16" height="16" fill="#d8401c"/><text class="ares" x="11" y="10">ARES</text><path d="M4 12.500h14M4 14.500h14M4 16.500h14" stroke="#f8c8b8"/>`)}</button>
        </div>
        <div class="main">
          <div class="modes">
            ${modeGroups.map((g, gi) => html`${gi ? html`<div class="hr"></div>` : null}${g.map(([label, icon], i) => html`<button class=${classMap({ pressed: !gi && !i })} aria-label=${label}>${icon}</button>`)}`)}
          </div>
          <div class="rot">
            ${[rotate("M16 7.500A6 6 0 1 0 16.500 14M17 3v5.500h-5.500", "Rotate clockwise"), rotate("M6 7.500A6 6 0 1 1 5.500 14M5 3v5.500h5.500", "Rotate anti-clockwise")].map(([l, i]) => html`<button aria-label=${l}>${i}</button>`)}
            <input aria-label="Angle" value="0°" />
            <div class="hr"></div>
            <button aria-label="Flip horizontal">${ico(svg`<path d="M3 11l5-4.500v3h6v-3l5 4.500-5 4.500v-3H8v3z" fill="#2c5ca0"/>`)}</button>
            <button aria-label="Flip vertical">${ico(svg`<path d="M11 3l4.500 5h-3v6h3L11 19l-4.500-5h3V8h-3z" fill="#2c5ca0"/>`)}</button>
          </div>
          <div class="side">
            <svg class="preview" width="121" height="100" viewBox="0 0 121 100">
              <path d="M0 5.500H121M0 92.500H121" stroke="#20d020"/><rect x="9.500" y="7" width="100" height="85" fill="none" stroke="#2020a0"/>
              <path d="M0 18h13v6H0zM0 36h13v6H0z" fill="#000"/>
              <path d="M0 31.500h22.500v9h30M0 50.500h60M22.500 40v32M29.500 28v-4h13v4h-5M44.500 21.500h20v28h-20zM38.500 33v24M41.500 33v18h20M28.500 45c2-6 8-6 8 0v5h-8M15.500 84V58.500h4M15 70.500h3M30.500 82V74M26.500 70.500h9v6h-9zM38.500 58v20h16V58M54.500 50v40M46 66.500h12M22 55.500h10v8h16M38 83.500h6c3-6-8-6-6 0v4h6" fill="none" stroke="#000"/>
              <path d="M38 34h4v16h-4zM48 62h4v5h-4zM48 77h4v4h-4zM22 46h3v18h-3z" fill="#000"/>
            </svg>
            <div class="parts">
              <div class="bar"><button>P</button><button>L</button></div>
              <ul>${parts.map((p, i) => html`<li class=${classMap({ sel: i === 0 })}>${p}</li>`)}</ul>
            </div>
          </div>
          <div class="sheet">${this.renderSheet()}</div>
        </div>
        <div class="status">
          <span class="grip one"></span>
          <div class="play">
            <button aria-label="Play"><svg width="8" height="11" viewBox="0 0 8 11"><path d="M0 0l8 5.500-8 5.500z" fill="#108010"/></svg></button>
            <button aria-label="Step"><svg width="11" height="11" viewBox="0 0 11 11"><path d="M0 0h2v11H0zM4 0l7 5.500L4 11z"/></svg></button>
            <button aria-label="Pause"><svg width="8" height="11" viewBox="0 0 8 11"><path d="M0 0h3v11H0zM5 0h3v11H5z"/></svg></button>
            <button aria-label="Stop"><svg width="10" height="10" viewBox="0 0 10 10"><path d="M0 0h10v10H0z"/></svg></button>
          </div>
          <div class="field msg"><svg width="16" height="14" viewBox="0 0 16 14"><path d="M8 1l7 12H1z" fill="#f8e010" stroke="#b09c10"/><path d="M8 4.500v4.500M8 10v2" stroke="#000" stroke-width="1.800"/></svg><span>6 Message(s)</span></div>
          <span class="grip"></span>
          <div class="field anim">ANIMATING: 00:00:03.258250 (CPU load 99%)</div>
          <span class="grip"></span>
          <div class="field last"></div>
        </div>
      </div>
      <scope-window class="win w1" .model=${scopeOne} .trace=${tracePwm}></scope-window>
      <counter-window class="win c1" digits="00000050" dark></counter-window>
      <counter-window class="win c2" digits="00016000"></counter-window>
      <scope-window class="win w2" active .model=${scopeTwo} .trace=${tracePulse}></scope-window>`;
  }
}
